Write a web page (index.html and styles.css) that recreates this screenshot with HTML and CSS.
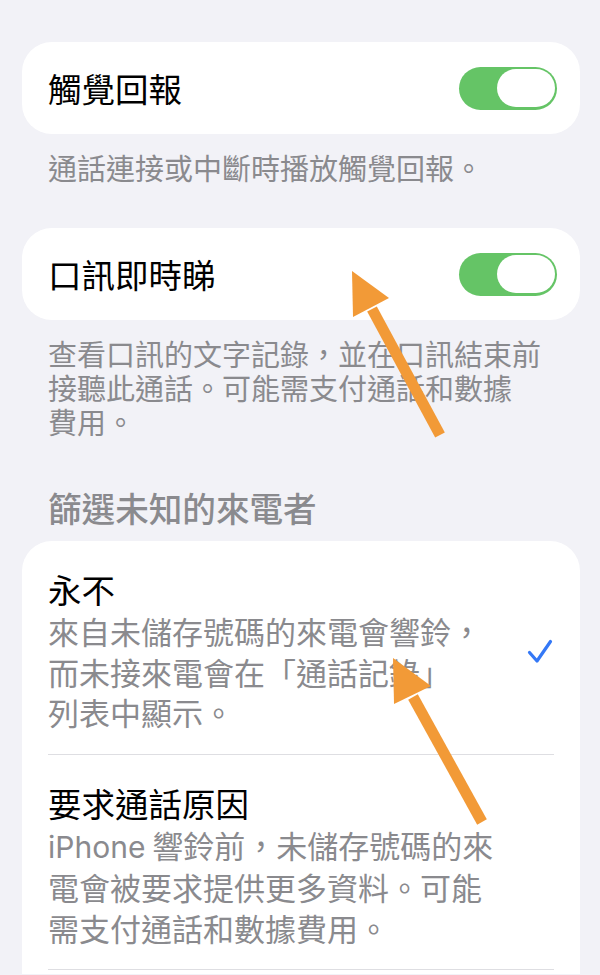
FILE: index.html
```html
<!DOCTYPE html>
<html lang="zh-Hant">
<head>
<meta charset="utf-8">
<title>電話設定</title>
<link rel="stylesheet" href="styles.css">
</head>
<body>
<div class="page">
  <div class="card toggle-row">
    <span class="title">觸覺回報</span>
    <span class="switch"><span class="knob"></span></span>
  </div>
  <p class="footer">通話連接或中斷時播放觸覺回報。</p>

  <div class="card toggle-row card-second">
    <span class="title">口訊即時睇</span>
    <span class="switch"><span class="knob"></span></span>
  </div>
  <p class="footer">查看口訊的文字記錄，並在口訊結束前<br>接聽此通話。可能需支付通話和數據<br>費用。</p>

  <h2 class="header">篩選未知的來電者</h2>

  <div class="card list">
    <div class="option">
      <div class="option-text">
        <div class="title">永不</div>
        <div class="sub">來自未儲存號碼的來電會響鈴，<br>而未接來電會在「通話記錄」<br>列表中顯示。</div>
      </div>
      <svg class="check" width="24" height="24" viewBox="0 0 24 24"><path d="M1.5 13.5 L9 22 L22.5 2.5" fill="none" stroke="#3478f6" stroke-width="3.2" stroke-linecap="round" stroke-linejoin="round"/></svg>
    </div>
    <div class="sep"></div>
    <div class="option">
      <div class="option-text">
        <div class="title">要求通話原因</div>
        <div class="sub"><span class="latin">iPhone</span> 響鈴前，未儲存號碼的來<br>電會被要求提供更多資料。可能<br>需支付通話和數據費用。</div>
      </div>
    </div>
    <div class="sep"></div>
  </div>
</div>

<svg class="arrows" width="600" height="975" viewBox="0 0 600 975">
  <line x1="440" y1="435" x2="372" y2="309" stroke="#f29a37" stroke-width="11"/>
  <polygon points="352,271 353,317 389,298" fill="#f29a37"/>
  <line x1="482" y1="822" x2="413" y2="697" stroke="#f29a37" stroke-width="11"/>
  <polygon points="393,658 394,704 431,686" fill="#f29a37"/>
</svg>
</body>
</html>
```

FILE: styles.css
```css
html, body {
  margin: 0;
  padding: 0;
}

body {
  background: #f2f2f7;
  font-family: "Noto Sans CJK TC", "Noto Sans CJK SC", sans-serif;
  color: #000;
  width: 600px;
  height: 975px;
  overflow: hidden;
  position: relative;
}

.page {
  padding: 42px 20px 0 22px;
}

.card {
  background: #fff;
  border-radius: 30px;
}

.toggle-row {
  height: 92px;
  box-sizing: border-box;
  display: flex;
  align-items: center;
  justify-content: space-between;
  padding: 0 23px 0 26px;
}

.card-second {
  margin-top: 44px;
}

.title {
  font-size: 33.5px;
  line-height: 40px;
  font-weight: 400;
}

.switch {
  width: 98px;
  height: 43px;
  box-sizing: border-box;
  border-radius: 22px;
  background: #65c466;
  display: flex;
  justify-content: flex-end;
  align-items: center;
  padding: 0 2.5px;
}

.knob {
  width: 58px;
  height: 38px;
  border-radius: 19px;
  background: #fff;
}

.footer {
  margin: 0;
  padding: 16px 26px 0 26px;
  font-size: 29px;
  line-height: 34px;
  color: #8a8a8e;
  white-space: nowrap;
}

.header {
  margin: 0;
  padding: 50px 26px 0 26px;
  font-size: 33.6px;
  line-height: 40px;
  font-weight: 500;
  color: #8a8a8e;
  white-space: nowrap;
}

.list {
  margin-top: 13px;
  border-bottom-left-radius: 0;
  border-bottom-right-radius: 0;
  padding-bottom: 4px;
}

.option {
  display: flex;
  align-items: center;
  justify-content: space-between;
  padding: 28px 28px 21px 26px;
}

.option-text {
  display: flex;
  flex-direction: column;
}

.sub {
  margin-top: 2px;
  font-size: 31px;
  line-height: 40.5px;
  color: #8a8a8e;
  white-space: nowrap;
}

.latin {
  font-family: "Inter", "Noto Sans CJK TC", sans-serif;
  font-size: 30px;
}

.check {
  display: block;
  overflow: visible;
}

.sep {
  height: 1px;
  background: #dedee2;
  margin: 0 26px 0 26px;
}

.arrows {
  position: absolute;
  left: 0;
  top: 0;
  pointer-events: none;
}
```
